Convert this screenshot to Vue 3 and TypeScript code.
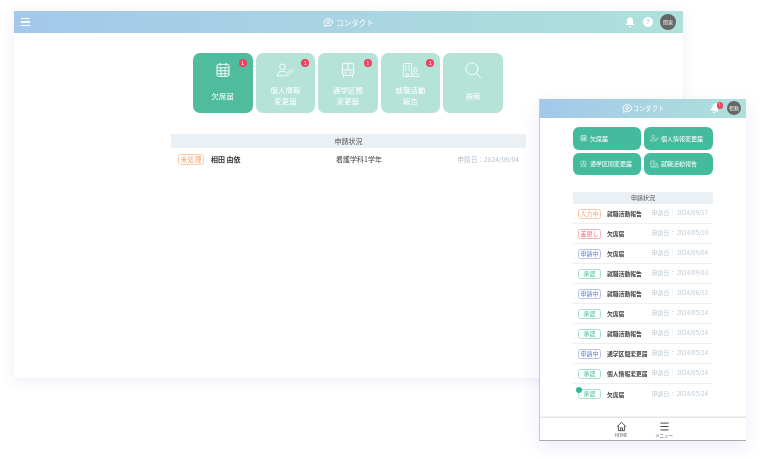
<script setup lang="ts">
type TagKind = "draft" | "back" | "applying" | "ok";

const tiles = [
  { label: ["欠席届"], icon: "cal", active: true, badge: true },
  { label: ["個人情報", "変更届"], icon: "user", active: false, badge: true },
  { label: ["通学区間", "変更届"], icon: "train", active: false, badge: true },
  { label: ["就職活動", "報告"], icon: "job", active: false, badge: true },
  { label: ["検索"], icon: "search", active: false, badge: false },
];

const phoneTiles = [
  { label: "欠席届", icon: "cal" },
  { label: "個人情報変更届", icon: "user" },
  { label: "通学区間変更届", icon: "train" },
  { label: "就職活動報告", icon: "job" },
];

const rows: { tag: string; kind: TagKind; name: string; date: string }[] = [
  { tag: "入力中", kind: "draft", name: "就職活動報告", date: "2024/09/17" },
  { tag: "差戻し", kind: "back", name: "欠席届", date: "2024/05/10" },
  { tag: "申請中", kind: "applying", name: "欠席届", date: "2024/09/04" },
  { tag: "承認", kind: "ok", name: "就職活動報告", date: "2024/09/03" },
  { tag: "申請中", kind: "applying", name: "就職活動報告", date: "2024/06/13" },
  { tag: "承認", kind: "ok", name: "欠席届", date: "2024/05/24" },
  { tag: "承認", kind: "ok", name: "就職活動報告", date: "2024/05/24" },
  { tag: "申請中", kind: "applying", name: "通学区間変更届", date: "2024/05/24" },
  { tag: "承認", kind: "ok", name: "個人情報変更届", date: "2024/05/24" },
  { tag: "承認", kind: "ok", name: "欠席届", date: "2024/05/24" },
];
</script>

<template>
  <div class="stage">
    <svg width="0" height="0" class="defs">
      <symbol id="i-cal" viewBox="0 0 24 24" fill="none" stroke="currentColor" stroke-width="1.3">
        <rect x="4" y="4.500" width="16" height="16" rx="2" />
        <path d="M8 2.500v4M16 2.500v4M4 9h16M4 13h16M4 17h16M9.300 9v11.500M14.700 9v11.500" />
      </symbol>
      <symbol id="i-user" viewBox="0 0 28 24" fill="none" stroke="currentColor" stroke-width="1.3">
        <circle cx="10" cy="7" r="4.500" />
        <path d="M2 21c0-4.500 3-7 8-7 2 0 3.500.4 5 1.200M2 21h12" stroke-linecap="round" />
        <path d="M16 21l1-3.500 7-6.500 2.300 2.300-7 6.700z" stroke-linejoin="round" />
      </symbol>
      <symbol id="i-train" viewBox="0 0 24 24" fill="none" stroke="currentColor" stroke-width="1.3">
        <rect x="4.500" y="3" width="15" height="16" rx="3" />
        <path d="M4.500 12h15M12 3v9M7 19l-2 3M17 19l2 3" />
        <circle cx="8.500" cy="15.500" r=".6" fill="currentColor" />
        <circle cx="15.500" cy="15.500" r=".6" fill="currentColor" />
      </symbol>
      <symbol id="i-job" viewBox="0 0 28 24" fill="none" stroke="currentColor" stroke-width="1.3">
        <rect x="2" y="2" width="13" height="20" rx="1" />
        <path d="M7 22v-4h3v4" />
        <path d="M5 5.500h2M10 5.500h2M5 9h2M10 9h2M5 12.500h2M10 12.500h2" stroke-width="2" />
        <circle cx="21" cy="12" r="3" />
        <path d="M16 22c0-3 2-4.500 5-4.500s5 1.500 5 4.500z" />
      </symbol>
      <symbol id="i-search" viewBox="0 0 24 24" fill="none" stroke="currentColor" stroke-width="1.2">
        <circle cx="10.500" cy="10.500" r="8" />
        <path d="M16.500 16.500l6 6" stroke-linecap="round" />
      </symbol>
      <symbol id="i-chat" viewBox="0 0 20 18" fill="none" stroke="currentColor" stroke-width="2">
        <path d="M3 17l1-4C2.700 11.800 2 10.300 2 8.500 2 4.800 5.500 1.500 10.500 1.500S19 4.800 19 8.500s-3.500 7-8.500 7c-1.200 0-2.300-.2-3.300-.5z" stroke-linejoin="round" />
        <circle cx="10.500" cy="8.500" r="2.800" />
      </symbol>
      <symbol id="i-bell" viewBox="0 0 16 16">
        <path fill="currentColor" d="M8 1c.7 0 1 .5 1 1 2 .5 3 2 3 4v3.500l2 2.500H2l2-2.500V6c0-2 1-3.500 3-4 0-.5.300-1 1-1zM6.300 13.200h3.400C9.600 14.300 8.900 15 8 15s-1.600-.7-1.700-1.800z" />
      </symbol>
    </svg>

    <section class="win desktop">
      <header class="bar">
        <span class="burger"><i /><i /><i /></span>
        <span class="contact">
          <svg class="chat"><use href="#i-chat" /></svg>コンタクト
        </span>
        <span class="bar-right">
          <svg class="bell"><use href="#i-bell" /></svg>
          <span class="help">?</span>
          <span class="avatar">関東</span>
        </span>
      </header>

      <div class="desk-body">
        <div class="tiles">
          <div v-for="t in tiles" :key="t.icon" class="tile" :class="{ active: t.active }">
            <span v-if="t.badge" class="badge">1</span>
            <svg class="tile-icon"><use :href="`#i-${t.icon}`" /></svg>
            <div class="tile-label">
              <span v-for="l in t.label" :key="l">{{ l }}</span>
            </div>
          </div>
        </div>

        <div class="status">
          <div class="status-head">申請状況</div>
          <div class="desk-row">
            <span class="tag draft">未処理</span>
            <b class="person">相田 由依</b>
            <span class="course">看護学科1学年</span>
            <span class="date">申請日：2024/09/04</span>
          </div>
        </div>
      </div>
    </section>

    <section class="win phone">
      <header class="bar small">
        <span class="contact">
          <svg class="chat"><use href="#i-chat" /></svg>コンタクト
        </span>
        <span class="bar-right">
          <span class="bell-wrap">
            <svg class="bell"><use href="#i-bell" /></svg>
            <span class="badge">1</span>
          </span>
          <span class="avatar">暢勲</span>
        </span>
      </header>

      <div class="phone-body">
        <div class="p-tiles">
          <div v-for="t in phoneTiles" :key="t.label" class="p-tile">
            <svg class="p-icon"><use :href="`#i-${t.icon}`" /></svg>{{ t.label }}
          </div>
        </div>

        <div class="p-status">
          <div class="p-head">申請状況</div>
          <div v-for="(r, i) in rows" :key="i" class="p-row">
            <span class="tag" :class="r.kind">{{ r.tag }}</span>
            <b class="p-name">{{ r.name }}</b>
            <span class="p-date">申請日： {{ r.date }}</span>
          </div>
          <span class="dot" />
        </div>
      </div>

      <nav class="tabs">
        <div class="tab">
          <svg viewBox="0 0 16 16" class="tab-icon" fill="none" stroke="currentColor" stroke-width="1.2">
            <path d="M1.500 8L8 2l6.500 6M3.500 7v7h9V7M6.500 14v-4h3v4" stroke-linejoin="round" />
          </svg>
          <span>HOME</span>
        </div>
        <div class="tab">
          <svg viewBox="0 0 16 16" class="tab-icon" fill="none" stroke="currentColor" stroke-width="1.3">
            <path d="M2 3h12M2 8h12M2 13h12" />
          </svg>
          <span>メニュー</span>
        </div>
      </nav>
    </section>
  </div>
</template>

<style>
html,
body {
  margin: 0;
  background: #fff;
}
</style>

<style scoped>
.stage {
  position: relative;
  width: 760px;
  height: 459px;
  overflow: hidden;
  background: #fff;
  font-family: "Noto Sans CJK JP", "Noto Sans", sans-serif;
  color: #444;
  filter: blur(0.3px);
}
.defs {
  position: absolute;
}
.win {
  position: absolute;
  display: flex;
  flex-direction: column;
  background: #fff;
}
.desktop {
  left: 14px;
  top: 11px;
  width: 669px;
  height: 367px;
  box-shadow: 0 3px 12px rgba(120, 120, 220, 0.14);
}
.phone {
  left: 539px;
  top: 99px;
  width: 207px;
  height: 342px;
  border-left: 1px solid #c9c9cf;
  border-bottom: 1px solid #a9a9b0;
  box-sizing: border-box;
  box-shadow: 0 6px 16px rgba(120, 120, 220, 0.14);
}

.bar {
  position: relative;
  height: 22px;
  flex: none;
  display: flex;
  align-items: center;
  justify-content: center;
  background: linear-gradient(90deg, #a3c8ea, #aee1da);
  color: #fff;
}
.bar.small {
  height: 19px;
}
.burger {
  position: absolute;
  left: 7px;
  top: 7px;
  display: flex;
  flex-direction: column;
  gap: 2px;
  width: 9px;
}
.burger i {
  height: 1.300px;
  background: #fff;
}
.contact {
  display: flex;
  align-items: center;
  gap: 3px;
  font-size: 7.500px;
}
.small .contact {
  font-size: 6.300px;
  gap: 1px;
}
.chat {
  width: 10px;
  height: 9px;
}
.bar-right {
  position: absolute;
  right: 7px;
  top: 3px;
  display: flex;
  align-items: center;
}
.bell {
  width: 12px;
  height: 12px;
  display: block;
}
.help {
  width: 10px;
  height: 10px;
  margin: 0 7px 0 7px;
  border-radius: 50%;
  background: #fff;
  color: #a9dcd8;
  font: bold 7px/10px "Liberation Sans", sans-serif;
  text-align: center;
}
.avatar {
  width: 16px;
  height: 16px;
  border-radius: 50%;
  background: #666;
  color: #e8e8e8;
  font-size: 5px;
  line-height: 16px;
  text-align: center;
}
.small .bar-right {
  right: 5px;
  top: 2px;
}
.small .avatar {
  width: 14px;
  height: 14px;
  line-height: 14px;
}
.bell-wrap {
  position: relative;
  margin-right: 6px;
}
.bell-wrap .bell {
  transform: rotate(15deg);
}
.bell-wrap .badge {
  top: 0;
  right: -2px;
  width: 6.500px;
  height: 6.500px;
  font-size: 3px;
  line-height: 6.500px;
}

.desk-body {
  display: flex;
  flex-direction: column;
  align-items: center;
  padding-top: 20px;
}
.tiles {
  display: flex;
  gap: 3px;
  margin-bottom: 21px;
  margin-right: 1px;
}
.tile {
  position: relative;
  width: 59.600px;
  height: 60px;
  border-radius: 7px;
  background: #b5e3d7;
  color: #fff;
  display: flex;
  flex-direction: column;
  align-items: center;
  box-sizing: border-box;
  padding-top: 8px;
}
.tile.active {
  background: #4fbc9e;
}
.tile-icon {
  width: 18px;
  height: 18px;
  flex: none;
}
.tile-label {
  flex: 1;
  display: flex;
  flex-direction: column;
  justify-content: center;
  align-items: center;
  font-size: 7.300px;
  line-height: 11px;
  letter-spacing: 0.2px;
}
.badge {
  position: absolute;
  top: 6px;
  right: 6px;
  width: 8px;
  height: 8px;
  border-radius: 50%;
  background: #f23f5d;
  color: #fff;
  font: 5px/8px "Liberation Sans", sans-serif;
  text-align: center;
}

.status {
  width: 355px;
}
.status-head {
  height: 14px;
  background: #ebf0f4;
  font-size: 7px;
  line-height: 14px;
  text-align: center;
  color: #555;
}
.desk-row {
  position: relative;
  display: flex;
  align-items: center;
  height: 22px;
  padding: 0 7px;
  font-size: 7px;
}
.tag {
  flex: none;
  box-sizing: border-box;
  width: 26px;
  height: 11px;
  border: 1px solid;
  border-radius: 2.500px;
  font-size: 7px;
  line-height: 9px;
  text-align: center;
}
.tag.draft {
  color: #f5a469;
  border-color: #fbcba6;
}
.tag.back {
  color: #f2717f;
  border-color: #f8b0b8;
}
.tag.applying {
  color: #5b7fd8;
  border-color: #b3c3ee;
}
.tag.ok {
  color: #4fbc9e;
  border-color: #a8e0cf;
}
.person {
  margin-left: 7px;
  font-weight: 700;
  color: #333;
}
.course {
  position: absolute;
  left: 165px;
  color: #444;
}
.date {
  margin-left: auto;
  color: #b6c2cc;
  font-size: 6.700px;
}

.phone-body {
  flex: 1;
  display: flex;
  flex-direction: column;
  padding: 9px 33px 0;
}
.p-tiles {
  display: grid;
  grid-template-columns: 68px 69px;
  gap: 3px;
  margin-bottom: 17px;
}
.p-tile {
  height: 22.500px;
  border-radius: 6px;
  background: #45bb9d;
  color: #fff;
  display: flex;
  align-items: center;
  padding-left: 6px;
  font-size: 6px;
  white-space: nowrap;
}
.p-icon {
  width: 9px;
  height: 8px;
  margin-right: 2px;
  flex: none;
}
.p-status {
  position: relative;
  width: 140px;
}
.p-head {
  height: 12px;
  background: #ebf0f4;
  font-size: 6px;
  line-height: 12px;
  text-align: center;
  color: #555;
}
.p-row {
  display: flex;
  align-items: center;
  height: 20px;
  box-sizing: border-box;
  padding-left: 5px;
  border-bottom: 1px solid #eee;
}
.p-row:last-of-type {
  border-bottom: none;
}
.p-row .tag {
  width: 23px;
  height: 10px;
  font-size: 6px;
  line-height: 8px;
}
.p-name {
  margin-left: 6px;
  font-size: 5.800px;
  font-weight: 700;
  color: #444;
  white-space: nowrap;
}
.p-date {
  margin-left: auto;
  padding-right: 5px;
  margin-top: -2px;
  font-size: 5.800px;
  letter-spacing: 0.1px;
  color: #bcc7d0;
  white-space: nowrap;
}
.dot {
  position: absolute;
  left: 3px;
  bottom: 0;
  width: 6px;
  height: 6px;
  margin-bottom: 11px;
  border-radius: 50%;
  background: #2fb998;
}

.tabs {
  flex: none;
  height: 22px;
  display: flex;
  justify-content: center;
  gap: 26px;
  padding-right: 1px;
  border-top: 1px solid #e4e4e4;
  box-shadow: 0 -1px 1px rgba(0, 0, 0, 0.05);
}
.tab {
  width: 17px;
  display: flex;
  flex-direction: column;
  align-items: center;
  padding-top: 3px;
  font-size: 4.500px;
  line-height: 6px;
  color: #555;
  white-space: nowrap;
}
.tab-icon {
  width: 11px;
  height: 11px;
  flex: none;
  color: #333;
}
</style>
